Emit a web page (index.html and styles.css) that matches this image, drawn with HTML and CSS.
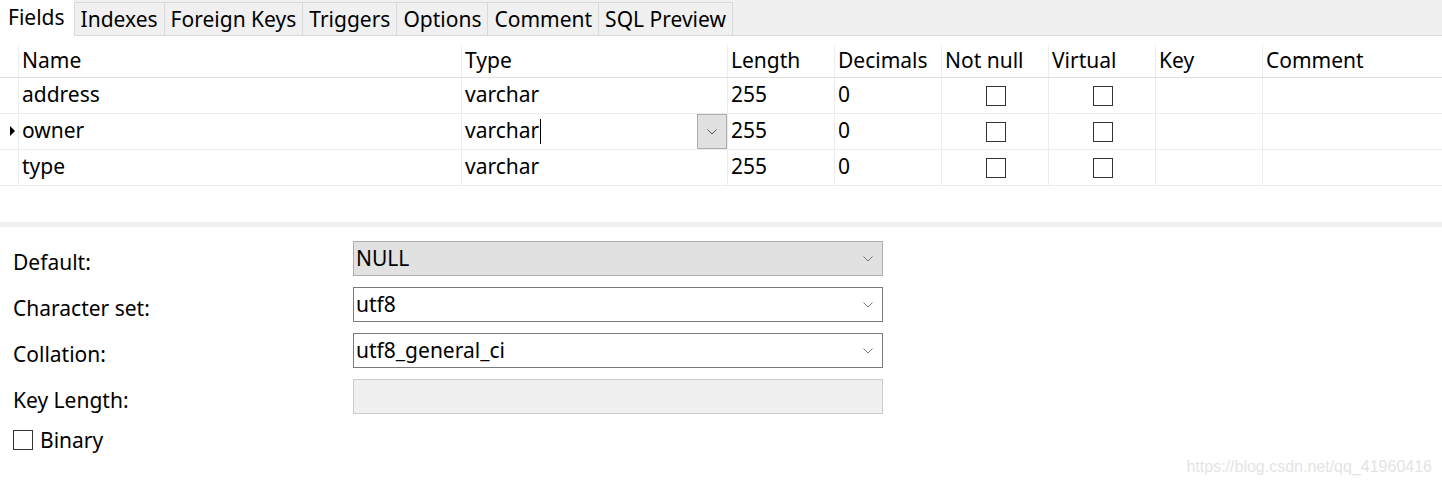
FILE: index.html
```html
<!DOCTYPE html>
<html>
<head>
	<title>Table Design</title>
	<meta charset="utf-8">
	<link rel="stylesheet" href="styles.css">
</head>
<body>
<div class="page">

	<div class="tabs">
		<div class="tab active">Fields</div>
		<div class="tab first">Indexes</div>
		<div class="tab">Foreign Keys</div>
		<div class="tab">Triggers</div>
		<div class="tab">Options</div>
		<div class="tab">Comment</div>
		<div class="tab">SQL Preview</div>
	</div>

	<div class="grid">
		<div class="row head">
			<div class="gutter"></div>
			<div class="cell">Name</div>
			<div class="cell">Type</div>
			<div class="cell">Length</div>
			<div class="cell">Decimals</div>
			<div class="cell">Not null</div>
			<div class="cell">Virtual</div>
			<div class="cell">Key</div>
			<div class="cell">Comment</div>
		</div>

		<div class="row">
			<div class="gutter"></div>
			<div class="cell">address</div>
			<div class="cell">varchar</div>
			<div class="cell">255</div>
			<div class="cell">0</div>
			<div class="cell check"><span class="box"></span></div>
			<div class="cell check"><span class="box"></span></div>
			<div class="cell"></div>
			<div class="cell"></div>
		</div>

		<div class="row">
			<div class="gutter"><span class="marker"></span></div>
			<div class="cell">owner</div>
			<div class="cell editing">
				<span class="value">varchar<span class="caret"></span></span>
				<span class="drop">
					<svg width="10" height="6" viewBox="0 0 10 6"><polyline points="0.5,0.5 5,5 9.5,0.5" fill="none" stroke="#555" stroke-width="1"/></svg>
				</span>
			</div>
			<div class="cell">255</div>
			<div class="cell">0</div>
			<div class="cell check"><span class="box"></span></div>
			<div class="cell check"><span class="box"></span></div>
			<div class="cell"></div>
			<div class="cell"></div>
		</div>

		<div class="row">
			<div class="gutter"></div>
			<div class="cell">type</div>
			<div class="cell">varchar</div>
			<div class="cell">255</div>
			<div class="cell">0</div>
			<div class="cell check"><span class="box"></span></div>
			<div class="cell check"><span class="box"></span></div>
			<div class="cell"></div>
			<div class="cell"></div>
		</div>
	</div>

	<div class="splitter"></div>

	<div class="props">
		<div class="prop">
			<label>Default:</label>
			<div class="combo readonly">NULL
				<svg class="chev" width="10" height="6" viewBox="0 0 10 6"><polyline points="0.5,0.5 5,5 9.5,0.5" fill="none" stroke="#777" stroke-width="1"/></svg>
			</div>
		</div>
		<div class="prop">
			<label>Character set:</label>
			<div class="combo">utf8
				<svg class="chev" width="10" height="6" viewBox="0 0 10 6"><polyline points="0.5,0.5 5,5 9.5,0.5" fill="none" stroke="#777" stroke-width="1"/></svg>
			</div>
		</div>
		<div class="prop">
			<label>Collation:</label>
			<div class="combo">utf8_general_ci
				<svg class="chev" width="10" height="6" viewBox="0 0 10 6"><polyline points="0.5,0.5 5,5 9.5,0.5" fill="none" stroke="#777" stroke-width="1"/></svg>
			</div>
		</div>
		<div class="prop">
			<label>Key Length:</label>
			<div class="combo disabled"></div>
		</div>
		<div class="binary">
			<span class="box"></span>
			<span>Binary</span>
		</div>
	</div>

	<div class="watermark">https://blog.csdn.net/qq_41960416</div>
</div>
</body>
</html>
```

FILE: styles.css
```css
body{
	margin: 0;
	background: #fff;
	color: #000;
	font-family: "Noto Sans", "Open Sans", sans-serif;
	font-size: 21px;
}

.page{
	position: relative;
	height: 485px;
	overflow: hidden;
}

/* tab strip */
.tabs{
	display: flex;
	align-items: flex-end;
	height: 35px;
	background: #f0f0f0;
	border-bottom: 1px solid #d9d9d9;
}

.tab{
	height: 32px;
	line-height: 32px;
	padding: 0 6px;
	border-top: 1px solid #d9d9d9;
	border-right: 1px solid #d9d9d9;
	background: #f0f0f0;
	white-space: nowrap;
}

.tab.first{
	border-left: 1px solid #d9d9d9;
}

.tab.active{
	line-height: 32px;
	padding: 1px 9px 0 8px;
	margin-bottom: -1px;
	border: none;
	background: #fff;
	box-sizing: border-box;
	height: 36px;
}

/* field grid */
.grid{
	margin-top: 9px;
}

.row{
	display: grid;
	grid-template-columns: 18px 443px 266px 107px 107px 107px 107px 107px 1fr;
	height: 36px;
	border-bottom: 1px solid #ececec;
	box-sizing: border-box;
}

.row.head{
	height: 33px;
	border-bottom-color: #dedede;
}

.cell{
	border-left: 1px solid #ececec;
	padding: 0 0 3px 3px;
	line-height: 32px;
	white-space: nowrap;
	overflow: hidden;
}

.head .cell{
	line-height: 31px;
	padding-bottom: 0;
}

.gutter{
	display: flex;
	align-items: center;
	justify-content: flex-end;
	padding-right: 3px;
}

.marker{
	width: 0;
	height: 0;
	border-top: 5px solid transparent;
	border-bottom: 5px solid transparent;
	border-left: 5px solid #000;
	margin-top: -1px;
}

.check{
	display: flex;
	align-items: center;
	justify-content: center;
	padding: 0 0 0 1px;
}

.box{
	display: inline-block;
	width: 20px;
	height: 20px;
	border: 1px solid #333;
	box-sizing: border-box;
	background: #fff;
}

.editing{
	display: flex;
	padding-right: 0;
}

.editing .value{
	flex: 1;
}

.caret{
	display: inline-block;
	width: 1px;
	height: 25px;
	background: #000;
	vertical-align: -6px;
	margin-left: 1px;
}

.drop{
	width: 30px;
	height: 35px;
	box-sizing: border-box;
	background: #e1e1e1;
	border: 1px solid #adadad;
	display: flex;
	align-items: center;
	justify-content: center;
}

.splitter{
	height: 5px;
	background: #f0f0f0;
	margin-top: 36px;
}

/* properties */
.props{
	padding: 14px 0 0 13px;
	display: flex;
	flex-direction: column;
	gap: 11px;
}

.prop{
	display: flex;
	height: 35px;
}

.prop label{
	width: 340px;
	line-height: 27px;
	padding-top: 8px;
}

.combo{
	position: relative;
	width: 530px;
	height: 35px;
	box-sizing: border-box;
	border: 1px solid #7a7a7a;
	background: #fff;
	padding: 1px 0 0 2px;
	line-height: 31px;
}

.combo.readonly{
	background: #e1e1e1;
	border-color: #adadad;
}

.combo.disabled{
	background: #f0f0f0;
	border-color: #cccccc;
}

.chev{
	position: absolute;
	right: 9px;
	top: 14px;
}

.binary{
	display: flex;
	align-items: center;
	gap: 7px;
	margin-top: 1px;
}

.watermark{
	position: absolute;
	right: 10px;
	bottom: 9px;
	font-family: "Liberation Sans", Arial, sans-serif;
	font-size: 16px;
	color: #e4e4e4;
}
```
